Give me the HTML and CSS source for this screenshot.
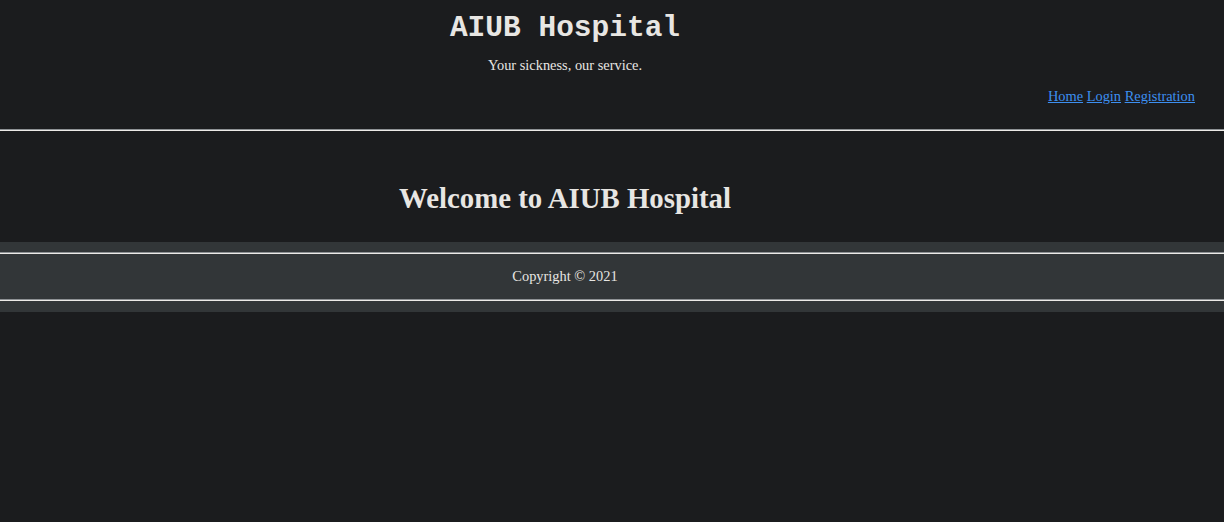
FILE: index.html
```html
<!DOCTYPE html>
<html lang="en">
<head>
<meta charset="utf-8">
<title>AIUB Hospital</title>
<link rel="stylesheet" href="styles.css">
</head>
<body>
<header class="site-header">
  <div class="brand">
    <h1 class="brand-title">AIUB Hospital</h1>
    <p class="brand-tagline">Your sickness, our service.</p>
  </div>
  <nav class="nav">
    <a href="#">Home</a> <a href="#">Login</a> <a href="#">Registration</a>
  </nav>
</header>
<hr class="rule">
<main class="content">
  <h2 class="welcome">Welcome to AIUB Hospital</h2>
</main>
<footer class="site-footer">
  <hr class="rule">
  <p class="copyright">Copyright © 2021</p>
  <hr class="rule">
</footer>
</body>
</html>
```

FILE: styles.css
```css
html, body {
  margin: 0;
  padding: 0;
  background: #1b1c1e;
  color: #e8e6e3;
  font-family: "Liberation Serif", "Times New Roman", serif;
}

.site-header {
  display: flex;
  flex-direction: column;
  padding-top: 10px;
}

.brand {
  width: 1130px;
  display: flex;
  flex-direction: column;
  align-items: center;
}

.brand-title {
  margin: 0;
  font-family: "Liberation Mono", "DejaVu Sans Mono", monospace;
  font-weight: bold;
  font-size: 29.5px;
  line-height: 36px;
  color: #e8e6e3;
}

.brand-tagline {
  margin: 9px 0 0;
  font-size: 14.4px;
  line-height: 20px;
}

.nav {
  margin-top: 11px;
  padding-right: 29px;
  text-align: right;
  font-size: 14.4px;
  line-height: 20px;
  height: 20px;
}

.nav a {
  color: #3d8ff0;
  text-decoration: underline;
}

.rule {
  margin: 0;
  height: 0;
  border: 0;
  border-top: 1px solid #8d9194;
  border-bottom: 1px solid #eceae7;
}

.site-header + .rule {
  margin-top: 23px;
}

.content {
  width: 1130px;
  display: flex;
  justify-content: center;
  padding-top: 50px;
  padding-bottom: 27px;
}

.welcome {
  margin: 0;
  font-size: 28.8px;
  line-height: 34px;
  font-weight: bold;
  color: #e8e6e3;
}

.site-footer {
  background: #323638;
  padding: 10px 0 11px;
}

.copyright {
  width: 1130px;
  margin: 12px 0 13px;
  text-align: center;
  font-size: 14.4px;
  line-height: 20px;
}
```
